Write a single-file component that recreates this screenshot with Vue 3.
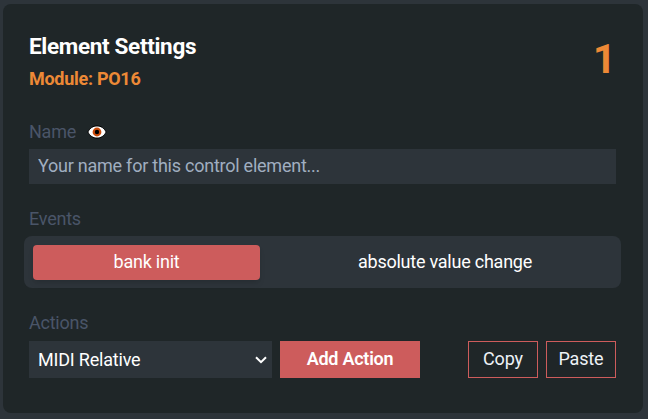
<script setup>
import { ref } from 'vue'

const name = ref('')
const events = ['bank init', 'absolute value change']
const selectedEvent = ref(events[0])
const actions = ['MIDI Relative', 'MIDI Absolute']
const action = ref(actions[0])
</script>

<template>
  <main class="page">
    <section class="panel">
      <header class="header">
        <div>
          <h1 class="title">Element Settings</h1>
          <div class="module">Module: PO16</div>
        </div>
        <div class="number">1</div>
      </header>

      <div class="label name-label">
        <span>Name</span>
        <svg class="eye" viewBox="0 0 20 14">
          <path d="M.8 7C3 3 6 .9 10 .9S17 3 19.200 7C17 11 14 13.100 10 13.100S3 11 .8 7Z" fill="#fff" stroke="#000" stroke-width="1" stroke-linejoin="round" />
          <circle cx="10" cy="7" r="3.300" fill="#000" stroke="#cc4c0c" stroke-width="2.200" />
        </svg>
      </div>
      <input v-model="name" class="name-input" type="text" placeholder="Your name for this control element..." />

      <div class="label events-label">Events</div>
      <div class="events">
        <button
          v-for="event in events"
          :key="event"
          class="event"
          :class="{ active: event === selectedEvent }"
          @click="selectedEvent = event"
        >{{ event }}</button>
      </div>

      <div class="label actions-label">Actions</div>
      <div class="actions">
        <div class="select-wrap">
          <select v-model="action" class="select">
            <option v-for="item in actions" :key="item">{{ item }}</option>
          </select>
          <svg class="chevron" viewBox="0 0 12 8">
            <path d="M1 1.200 6 6.200 11 1.200" fill="none" stroke="#fff" stroke-width="2" />
          </svg>
        </div>
        <button class="add">Add Action</button>
        <div class="clipboard">
          <button class="outline">Copy</button>
          <button class="outline">Paste</button>
        </div>
      </div>
    </section>
  </main>
</template>

<style>
body {
  margin: 0;
  background: #2d343a;
}
</style>

<style scoped>
.page {
  box-sizing: border-box;
  height: 419px;
  padding: 4px 5px 6px 3px;
  background: #2d343a;
  font-family: Roboto, sans-serif;
  font-size: 18px;
  letter-spacing: -0.240px;
  color: #fff;
}
.panel {
  box-sizing: border-box;
  height: 409px;
  padding: 28px 27px 0 26px;
  border-radius: 8px;
  background: #1f2628;
}
.header {
  display: flex;
  justify-content: space-between;
  height: 86px;
}
.title {
  margin: 0;
  font-size: 22.500px;
  line-height: 28px;
  font-weight: 700;
  letter-spacing: -0.330px;
}
.module {
  margin-top: 5px;
  line-height: 27px;
  font-weight: 700;
  letter-spacing: -0.280px;
  color: #ed8936;
}
.number {
  font-size: 40px;
  line-height: 56px;
  font-weight: 700;
  letter-spacing: 0;
  color: #ed8936;
}
.label {
  height: 27px;
  line-height: 27px;
  color: #4a5568;
}
.name-label {
  display: flex;
  align-items: center;
  height: 31px;
  line-height: 27px;
}
.name-label span {
  height: 27px;
  margin-bottom: 4px;
}
.eye {
  width: 20px;
  height: 14px;
  margin: 0 0 4px 11px;
}
.name-input {
  display: block;
  box-sizing: border-box;
  width: 100%;
  height: 35px;
  padding: 0 9px 2px;
  border: 0;
  border-radius: 0;
  outline: 0;
  background: #2d343a;
  color: #fff;
  font: inherit;
  letter-spacing: inherit;
}
.name-input::placeholder {
  color: #a0aec0;
  opacity: 1;
}
.events-label {
  margin-top: 21px;
}
.events {
  display: grid;
  grid-template-columns: 227px 1fr;
  gap: 18px;
  height: 35px;
  margin: 4px -5px 0;
  padding: 9px 9px 8px;
  border-radius: 8px;
  background: #2d343a;
}
button {
  padding: 0;
  border: 0;
  background: none;
  color: #fff;
  font: inherit;
  letter-spacing: inherit;
}
.event {
  height: 35px;
  padding-bottom: 2px;
  border-radius: 4px;
}
.event.active {
  background: #cd5c5c;
  box-shadow: 0 4px 6px -1px rgba(0, 0, 0, 0.100), 0 2px 4px -1px rgba(0, 0, 0, 0.060);
}
.actions-label {
  margin-top: 21px;
}
.actions {
  display: flex;
  gap: 8px;
  height: 37px;
  margin-top: 5px;
}
.select-wrap {
  position: relative;
  width: 243px;
}
.select {
  width: 100%;
  height: 37px;
  padding: 0 9px;
  border: 0;
  border-radius: 0;
  appearance: none;
  background: #2d343a;
  color: #fff;
  font: inherit;
  letter-spacing: -0.200px;
}
.chevron {
  position: absolute;
  top: 15px;
  right: 5px;
  width: 12px;
  height: 8px;
}
.add {
  width: 140px;
  padding-bottom: 2px;
  background: #cd5c5c;
  font-weight: 600;
}
.clipboard {
  display: flex;
  gap: 8px;
  margin-left: auto;
}
.outline {
  width: 70px;
  padding-bottom: 2px;
  border: 1px solid #cd5c5c;
  color: #edf2f7;
  letter-spacing: -0.150px;
}
</style>
